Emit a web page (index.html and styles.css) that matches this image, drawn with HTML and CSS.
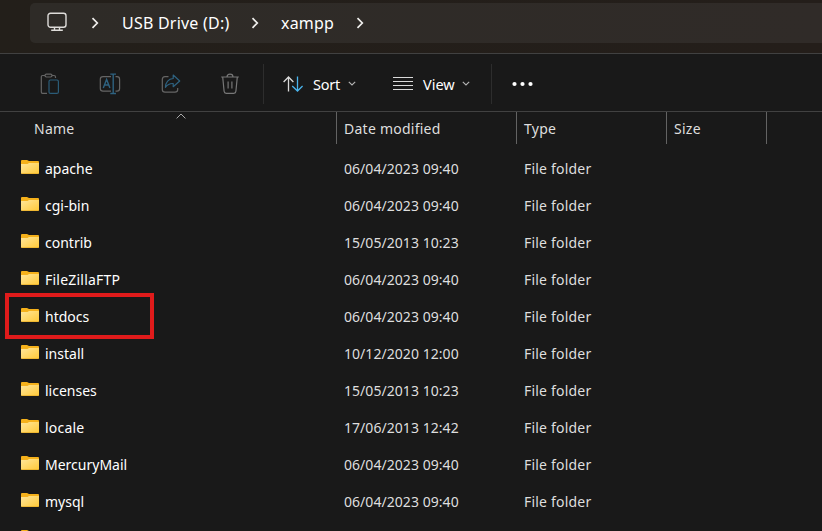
FILE: index.html
```html
<!DOCTYPE html>
<html lang="en">
<head>
<meta charset="utf-8">
<title>xampp</title>
<link rel="stylesheet" href="styles.css">
</head>
<body>
<svg width="0" height="0" class="defs" aria-hidden="true">
  <defs>
    <linearGradient id="face" x1="0" y1="0" x2="1" y2="1">
      <stop offset="0" stop-color="#ffe69b"/><stop offset="1" stop-color="#ffc937"/>
    </linearGradient>
    <symbol id="folder" viewBox="0 0 18 14">
      <path d="M0 1Q0 0 1 0H6L8 1H17Q18 1 18 2V6H0Z" fill="#f5b11b"/>
      <path d="M0 4H6.5L8 3H18V13Q18 14 17 14H1Q0 14 0 13Z" fill="url(#face)"/>
      <path d="M.5 13.6H17.5" stroke="#e9ad28" stroke-width=".8"/>
    </symbol>
    <symbol id="chev" viewBox="0 0 8 12"><path d="M1.5 1.2L6.3 6L1.5 10.8" fill="none" stroke="#f0efed" stroke-width="1.7"/></symbol>
    <symbol id="down" viewBox="0 0 8 5"><path d="M.8 .8L4 4L7.2 .8" fill="none" stroke="#b5b5b5" stroke-width="1.1"/></symbol>
  </defs>
</svg>
<header class="top">
  <nav class="address">
    <svg class="pc" width="20" height="20" viewBox="0 0 20 20" fill="none" stroke="#dedcd9" stroke-width="1.4"><rect x="1" y="1.2" width="18" height="14" rx="2.5"/><path d="M7.5 15.5V18M12.5 15.5V18M4.2 18.3H15.8"/></svg>
    <svg class="sep s1" width="8" height="12"><use href="#chev"/></svg>
    <span class="crumb drive">USB Drive (D:)</span>
    <svg class="sep s2" width="8" height="12"><use href="#chev"/></svg>
    <span class="crumb">xampp</span>
    <svg class="sep s3" width="8" height="12"><use href="#chev"/></svg>
  </nav>
</header>
<div class="toolbar">
  <div class="actions">
    <svg width="20" height="22" viewBox="0 0 20 22" fill="none" stroke="#656565" stroke-width="1.2"><path d="M5 2.5H2.5Q1.3 2.5 1.3 3.8V19Q1.3 20.3 2.5 20.3H7M12 2.5H14Q15.5 2.5 15.5 4V5"/><rect x="5" y="1.2" width="7" height="2.8" rx="1.4"/><rect x="9" y="7" width="9.4" height="13.4" rx="1.5" stroke="#2b5c78"/></svg>
    <svg width="22" height="22" viewBox="0 0 22 22" fill="none" stroke="#656565" stroke-width="1.2"><path d="M12 3.6H4Q1.3 3.6 1.3 6.3V15.5Q1.3 18.2 4 18.2H12M16.5 3.6H18Q20.6 3.6 20.6 6.3V15.5Q20.6 18.2 18 18.2H16.5"/><path d="M4.3 15L7.6 6.5L10.9 15M5.5 12H9.7M11.3 1.1H17M11.3 20.5H17M14.2 1V20.5" stroke="#2e6280" stroke-width="1.4"/></svg>
    <svg width="20" height="22" viewBox="0 0 20 22" fill="none" stroke="#656565" stroke-width="1.2"><path d="M7.5 3.7H4Q1.3 3.7 1.3 6.4V16.5Q1.3 19.2 4 19.2H14Q16.7 19.2 16.7 16.5V15"/><path d="M12.2 2L18.7 8L12.2 13.7V10.5Q7.4 10.2 4.4 14.3Q5 6.2 12.2 5.5Z" stroke="#2e6280" stroke-linejoin="round"/></svg>
    <svg width="20" height="22" viewBox="0 0 20 22" fill="none" stroke="#777" stroke-width="1.2"><path d="M1.2 4H18.8M7 4Q7 1.2 10 1.2T13 4M2.7 4L4.1 18.3Q4.3 20.3 6.2 20.3H13.8Q15.7 20.3 15.9 18.3L17.3 4M8.1 8.5V15.5M11.9 8.5V15.5"/></svg>
  </div>
  <div class="menus">
    <svg class="sort" width="20" height="16" viewBox="0 0 20 16" fill="none" stroke-width="1.3"><path d="M.6 6L5.5 1L10.4 6M5.5 1V15.5" stroke="#dadada"/><path d="M9.2 10L14.5 15L19.6 10M14.5 15V.5" stroke="#4ab5ee"/></svg>
    <span class="label sort-label">Sort</span>
    <svg class="d1" width="8" height="5"><use href="#down"/></svg>
    <svg class="lines" width="20" height="14" viewBox="0 0 20 14" stroke="#dadada" stroke-width="1.2"><path d="M0 .5H20M0 4.5H20M0 8.5H20M0 12.5H20"/></svg>
    <span class="label view-label">View</span>
    <svg class="d2" width="8" height="5"><use href="#down"/></svg>
  </div>
  <svg class="more" width="22" height="6" viewBox="0 0 22 6" fill="#fff"><circle cx="2.5" cy="3" r="2.1"/><circle cx="10.5" cy="3" r="2.1"/><circle cx="18.5" cy="3" r="2.1"/></svg>
</div>
<div class="columns">
  <div class="name-col">Name<svg class="asc" width="10" height="6" viewBox="0 0 10 6"><path d="M.6 5.4L5 1L9.4 5.4" fill="none" stroke="#aaa"/></svg></div>
  <div>Date modified</div><div>Type</div><div>Size</div>
</div>
<main class="files">
  <div class="row"><svg><use href="#folder"/></svg><span class="n">apache</span><span class="date">06/04/2023 09:40</span><span class="type">File folder</span></div>
  <div class="row"><svg><use href="#folder"/></svg><span class="n">cgi-bin</span><span class="date">06/04/2023 09:40</span><span class="type">File folder</span></div>
  <div class="row"><svg><use href="#folder"/></svg><span class="n">contrib</span><span class="date">15/05/2013 10:23</span><span class="type">File folder</span></div>
  <div class="row"><svg><use href="#folder"/></svg><span class="n wide">FileZillaFTP</span><span class="date">06/04/2023 09:40</span><span class="type">File folder</span></div>
  <div class="row marked"><svg><use href="#folder"/></svg><span class="n">htdocs</span><span class="date">06/04/2023 09:40</span><span class="type">File folder</span></div>
  <div class="row"><svg><use href="#folder"/></svg><span class="n">install</span><span class="date">10/12/2020 12:00</span><span class="type">File folder</span></div>
  <div class="row"><svg><use href="#folder"/></svg><span class="n">licenses</span><span class="date">15/05/2013 10:23</span><span class="type">File folder</span></div>
  <div class="row"><svg><use href="#folder"/></svg><span class="n wide">locale</span><span class="date">17/06/2013 12:42</span><span class="type">File folder</span></div>
  <div class="row"><svg><use href="#folder"/></svg><span class="n">MercuryMail</span><span class="date">06/04/2023 09:40</span><span class="type">File folder</span></div>
  <div class="row"><svg><use href="#folder"/></svg><span class="n">mysql</span><span class="date">06/04/2023 09:40</span><span class="type">File folder</span></div>
  <div class="row"><svg><use href="#folder"/></svg></div>
</main>
</body>
</html>
```
FILE: styles.css
```css
*, *::after { box-sizing: border-box; }
body {
  margin: 0;
  height: 531px;
  overflow: hidden;
  background: #191919;
  color: #dedede;
  font: 14px/20px "Noto Sans", sans-serif;
  white-space: nowrap;
}
svg { display: block; flex: none; }
.defs { position: absolute; }
.top {
  height: 54px;
  padding: 3px 0 0 30px;
  background: linear-gradient(90deg, #231f1a, #241e1a);
  border-bottom: 1px solid #414141;
}
.address {
  display: flex;
  align-items: center;
  height: 40px;
  padding-left: 17px;
  border-radius: 5px 0 0 5px;
  background: linear-gradient(90deg, #2e2b27, #302b28);
  color: #fff;
  font-size: 16px;
}
.pc { margin-top: -2px; }
.s1 { margin-left: 24px; }
.drive { width: 108px; margin-left: 23px; letter-spacing: .22px; }
.s2 { margin-left: 21px; }
.s2 + .crumb { width: 53px; margin-left: 22px; letter-spacing: .2px; }
.s3 { margin-left: 22px; }
.toolbar {
  display: flex;
  align-items: center;
  height: 58px;
  padding-top: 2px;
  border-bottom: 1px solid #414141;
}
.actions {
  display: flex;
  justify-content: space-between;
  width: 200px;
  margin-left: 40px;
}
.menus {
  display: flex;
  align-items: center;
  width: 229px;
  height: 40px;
  margin-left: 23px;
  padding-left: 19px;
  border: solid #2d2d2d;
  border-width: 0 1px;
}
.label { color: #fff; font-size: 14.5px; }
.sort-label { width: 28px; margin-left: 10px; letter-spacing: -.2px; }
.d1 { margin-left: 7px; }
.lines { margin-left: 37px; }
.view-label { width: 32px; margin-left: 10px; }
.d2 { margin-left: 7px; }
.more { margin-left: 20px; }
.columns {
  display: grid;
  grid-template-columns: 337px 180px 150px 100px;
  height: 32px;
  line-height: 33px;
}
.columns div { height: 32px; padding-left: 7px; border-right: 1px solid #636363; letter-spacing: .25px; }
.columns .name-col { position: relative; padding-left: 34px; }
.asc { position: absolute; left: 176px; top: 1px; }
.files { padding-top: 6px; }
.row {
  position: relative;
  display: grid;
  grid-template-columns: 24px 299px 180px 200px;
  align-items: center;
  height: 37px;
  padding-left: 21px;
}
.row svg { width: 18px; height: 14px; margin-top: -3px; }
.n { color: #fff; }
.wide { letter-spacing: .22px; }
.date { letter-spacing: .05px; }
.type { letter-spacing: .2px; }
.marked::after {
  content: "";
  position: absolute;
  left: 5px;
  top: -5px;
  width: 149px;
  height: 46px;
  border: 4px solid #e01b1b;
}
```
